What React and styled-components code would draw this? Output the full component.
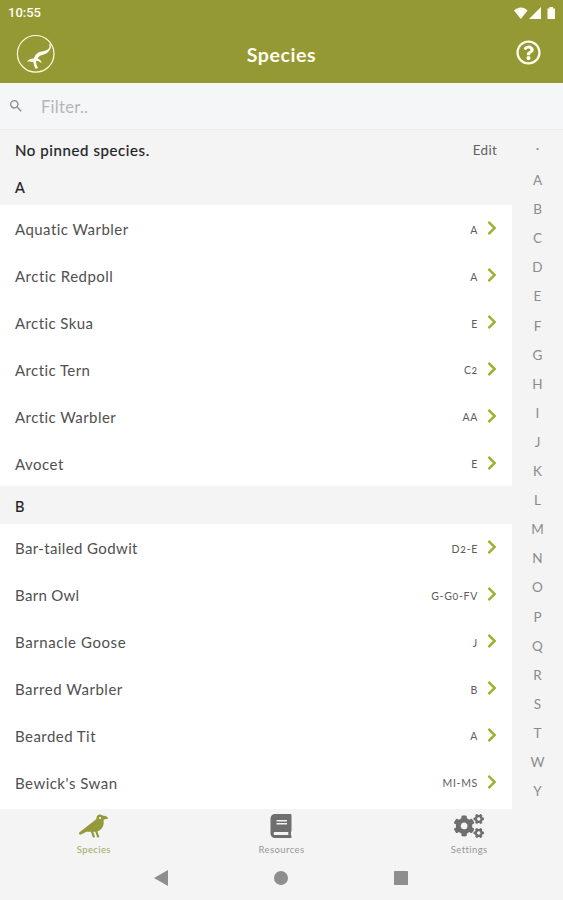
import React from "react";
import styled, { createGlobalStyle } from "styled-components";
import { FaCrow, FaBook, FaCogs, FaRegQuestionCircle, FaChevronRight } from "react-icons/fa";
import { MdSearch } from "react-icons/md";

const GlobalStyle = createGlobalStyle`
  * { box-sizing: border-box; }
  body { margin: 0; background: #f4f4f4; font-family: Lato, "Open Sans", sans-serif; overflow: hidden; }
`;

const Screen = styled.div`
  width: 563px;
  height: 900px;
  display: flex;
  flex-direction: column;
  background: #f4f4f4;
`;

const Header = styled.header`
  height: 83px;
  flex: none;
  background: #959934;
  color: #fffef2;
`;

const StatusBar = styled.div`
  height: 24px;
  padding: 1px 7px 0 8px;
  display: flex;
  align-items: center;
  justify-content: space-between;
  font: 500 13px/22px Roboto, sans-serif;
`;

const TitleBar = styled.div`
  height: 59px;
  padding: 0 22px 0 16px;
  display: grid;
  grid-template-columns: 40px 1fr 25px;
  align-items: center;
`;

const Title = styled.h1`
  margin: 2px 9px 0 0;
  text-align: center;
  font-size: 19.5px;
  font-weight: 700;
  letter-spacing: 0.6px;
`;

const Help = styled(FaRegQuestionCircle)`
  width: 25px;
  height: 25px;
  margin-top: -2px;
`;

const FilterBar = styled.div`
  height: 47px;
  flex: none;
  display: flex;
  align-items: center;
  padding-left: 8px;
  gap: 17px;
  border-bottom: 1px solid #ececec;
  background: #f5f6f7;
  color: #8c8c8c;
`;

const FilterText = styled.span`
  margin-top: 1px;
  color: #b5b5b5;
  font-size: 16.5px;
  letter-spacing: 0.3px;
`;

const Content = styled.main`
  flex: 1;
  min-height: 0;
  display: flex;
`;

const List = styled.div`
  width: 512px;
  height: 679px;
  overflow: hidden;
  background: #fff;
`;

const PinnedRow = styled.div`
  height: 40px;
  padding: 0 15px;
  display: flex;
  justify-content: space-between;
  align-items: center;
  background: #f4f4f4;
  color: #222;
  font-size: 15px;
  letter-spacing: 0.6px;
  -webkit-text-stroke: 0.2px #222;
`;

const Edit = styled.span`
  color: #626262;
  font-size: 13.5px;
  letter-spacing: 0.25px;
  -webkit-text-stroke: 0;
`;

const SectionHeader = styled.div`
  height: ${(p) => (p.$first ? 35 : 38)}px;
  padding: 0 15px;
  line-height: ${(p) => (p.$first ? 36 : 41)}px;
  background: #f4f4f4;
  color: #222;
  font-size: 14.5px;
  -webkit-text-stroke: 0.2px #222;
`;

const Row = styled.div`
  height: 46.85px;
  padding: 2px 14px 0 15px;
  display: flex;
  align-items: center;
  color: #505050;
`;

const Name = styled.span`
  flex: 1;
  font-size: 15px;
  letter-spacing: ${(p) => p.$tracking}px;
`;

const Code = styled.span`
  font-size: 10.5px;
  font-variant-numeric: oldstyle-nums;
  letter-spacing: 0.7px;
  margin: 1px 8px 0 0;
  color: #5c5c5c;
`;

const Chevron = styled(FaChevronRight)`
  width: 12px;
  height: 16px;
  margin-top: -2px;
  color: #a1b02e;
`;

const Index = styled.div`
  width: 51px;
  display: flex;
  flex-direction: column;
  align-items: center;
  padding-top: 7px;
  color: #8c8c8c;
  font-size: 13.5px;
`;

const Letter = styled.span`
  height: 29.1px;
  line-height: ${(p) => (p.$dot ? 22 : 29)}px;
`;

const TabBar = styled.nav`
  height: 52px;
  flex: none;
  display: grid;
  grid-template-columns: repeat(3, 1fr);
  background: #f4f4f4;
`;

const Tab = styled.div`
  display: flex;
  flex-direction: column;
  align-items: center;
  padding-top: 5px;
  color: ${(p) => (p.$active ? "#94993a" : "#6e6e6e")};
  svg { height: 24px; width: ${(p) => p.$icon}px; }
`;

const TabLabel = styled.span`
  margin-top: 6px;
  font-size: 9.5px;
  line-height: 12px;
  letter-spacing: 0.4px;
  color: ${(p) => (p.$active ? "#a3aa60" : "#969696")};
`;

const SystemBar = styled.div`
  height: 39px;
  flex: none;
  display: flex;
  justify-content: center;
  align-items: center;
  gap: 106px;
  padding: 0 1px 5px 0;
`;

const first = [
  ["Aquatic Warbler", "A", 0.45],
  ["Arctic Redpoll", "A", 0.48],
  ["Arctic Skua", "E", 0.4],
  ["Arctic Tern", "C2", 0.42],
  ["Arctic Warbler", "AA", 0.43],
  ["Avocet", "E", 0.5],
];
const second = [
  ["Bar-tailed Godwit", "D2-E", 0.38],
  ["Barn Owl", "G-G0-FV", 0.3],
  ["Barnacle Goose", "J", 0.58],
  ["Barred Warbler", "B", 0.52],
  ["Bearded Tit", "A", 0.45],
  ["Bewick's Swan", "MI-MS", 0.48],
];

function Species({ items }) {
  return items.map(([name, code, tracking]) => (
    <Row key={name}>
      <Name $tracking={tracking}>{name}</Name>
      <Code>{code}</Code>
      <Chevron />
    </Row>
  ));
}

function Logo() {
  return (
    <svg width="40" height="40" viewBox="0 0 40 40" fill="none">
      <circle cx="19.700" cy="19.800" r="18.300" stroke="#fffde0" strokeWidth="1.200" />
      <path
        fill="#fffef2"
        d="M34.800 12C34.500 16 32 19 28.500 20.200 25 21.400 22.500 21.800 21.600 24.500c2 .8 3.800 2.300 4.200 4.600-1.800-1.200-3.600-2.100-5.600-2.300-.3 2.400.2 4.600 1.900 7l-2.300 1.300c-1.500-1.900-1.800-4-2.300-6.500-1.800-1-3.900-1.200-6.500-1 1.700-2.300 3.700-3.300 6.900-3.200 1.200-4 3.600-6.200 7.900-6.900 4.800-.7 7.200-2.200 9-5.500Z"
      />
      <path d="M34 9.500c.4 2 .3 4.500-.8 6.200" stroke="#fffef2" strokeWidth="1.300" />
    </svg>
  );
}

function StatusIcons() {
  return (
    <svg width="43" height="14" viewBox="0 0 43 14" fill="#fffef6">
      <path d="M1 4.400c4-4 9.600-4 13.600 0L7.800 13Z" />
      <path d="M28 1v12H16Z" />
      <path d="M34.500 2.600h2V1h3.500v1.600h2V13h-7.500Z" />
    </svg>
  );
}

export default function App() {
  return (
    <Screen>
      <GlobalStyle />
      <Header>
        <StatusBar><span>10:55</span><StatusIcons /></StatusBar>
        <TitleBar><Logo /><Title>Species</Title><Help /></TitleBar>
      </Header>
      <FilterBar><MdSearch size={16} /><FilterText>Filter..</FilterText></FilterBar>
      <Content>
        <List>
          <PinnedRow>No pinned species.<Edit>Edit</Edit></PinnedRow>
          <SectionHeader $first>A</SectionHeader>
          <Species items={first} />
          <SectionHeader>B</SectionHeader>
          <Species items={second} />
        </List>
        <Index>
          {[..."·ABCDEFGHIJKLMNOPQRSTWY"].map((c) => <Letter key={c} $dot={c === "·"}>{c}</Letter>)}
        </Index>
      </Content>
      <TabBar>
        <Tab $active $icon={29}><FaCrow /><TabLabel $active>Species</TabLabel></Tab>
        <Tab $icon={22}><FaBook /><TabLabel>Resources</TabLabel></Tab>
        <Tab $icon={30}><FaCogs /><TabLabel>Settings</TabLabel></Tab>
      </TabBar>
      <SystemBar>
        <svg width="14" height="16" fill="#8e8e8e"><path d="M0 8 14 0v16Z" /></svg>
        <svg width="14" height="14" fill="#8e8e8e"><circle cx="7" cy="7" r="7" /></svg>
        <svg width="14" height="14" fill="#8e8e8e"><rect width="14" height="14" rx="0.500" /></svg>
      </SystemBar>
    </Screen>
  );
}
